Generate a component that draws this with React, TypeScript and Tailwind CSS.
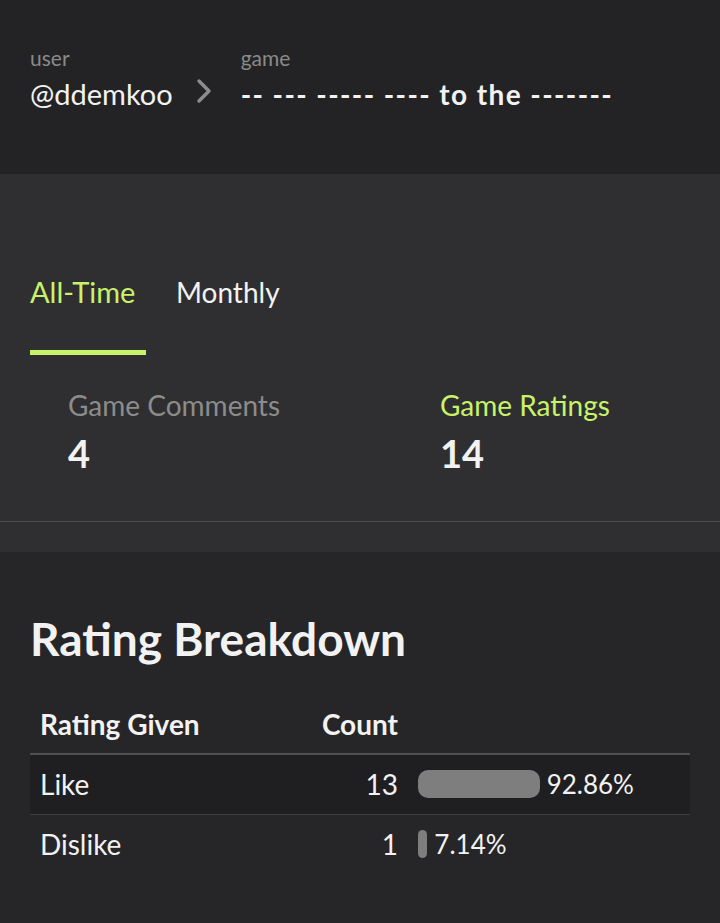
import { ChevronRight } from 'lucide-react'

const stats = [
  { label: 'Game Comments', value: 4, active: false },
  { label: 'Game Ratings', value: 14, active: true },
]

const ratings = [
  { label: 'Like', count: 13, pct: 92.86 },
  { label: 'Dislike', count: 1, pct: 7.14 },
]

export default function App() {
  return (
    <div className="min-h-[923px] overflow-hidden bg-[#262629] font-['Lato',sans-serif] text-[#f2f2f2]">
      {/* breadcrumb header */}
      <header className="h-[174px] bg-[#232325] px-[30px] pt-[44px]">
        <div className="flex items-start">
          <div className="flex flex-col">
            <span className="text-[21px] leading-[28px] text-[#8a8a8a]">user</span>
            <span className="mt-[4px] text-[29px] leading-[36px]">@ddemkoo</span>
          </div>
          <ChevronRight className="ml-[11px] mt-[27px] h-[40px] w-[40px] shrink-0 text-[#8c8c8c]" strokeWidth={2.1} />
          <div className="ml-[17px] flex flex-col">
            <span className="text-[21px] leading-[28px] text-[#8a8a8a]">game</span>
            <span className="mt-[4px] text-[28px] font-bold leading-[36px] tracking-[1.4px]">
              -- --- ----- ---- to the -------
            </span>
          </div>
        </div>
      </header>

      {/* stats */}
      <section className="bg-[#2f2f31] pt-[96px]">
        <nav className="flex gap-[30px] px-[30px]">
          <button className="w-[116px] border-b-[5px] border-[#c9f26b] pb-[36px] text-left text-[29px] leading-[44px] text-[#c9f26b]">
            All-Time
          </button>
          <button className="border-b-[5px] border-transparent pb-[36px] text-left text-[28px] leading-[44px] text-[#f2f2f2]">
            Monthly
          </button>
        </nav>
        <div className="mt-[32px] flex pb-[44px] pl-[68px]">
          {stats.map((s, i) => (
            <div key={s.label} className={i === 0 ? 'w-[372px] shrink-0' : 'flex-1'}>
              <div className={s.active ? 'text-[28px] leading-[36px] text-[#c9f26b]' : 'text-[28px] leading-[36px] text-[#8c8c8c]'}>
                {s.label}
              </div>
              <div className="mt-[6px] text-[38px] font-bold leading-[48px]">{s.value}</div>
            </div>
          ))}
        </div>
        <div className="h-[1px] bg-[#4b4b4d]" />
        <div className="h-[30px]" />
      </section>

      {/* breakdown */}
      <section className="px-[30px] pt-[59px]">
        <h2 className="text-[46px] font-bold leading-[56px]">Rating Breakdown</h2>
        <table className="mt-[27px] w-full border-collapse text-[28px]">
          <thead>
            <tr className="h-[60px] border-b-[2px] border-[#515153]">
              <th className="w-[280px] px-[10px] text-left font-bold">Rating Given</th>
              <th className="w-[98px] px-[10px] text-right font-bold">Count</th>
              <th />
            </tr>
          </thead>
          <tbody>
            {ratings.map((r, i) => (
              <tr
                key={r.label}
                className={i === 0 ? 'h-[60px] border-b border-[#3e3e41] bg-[#1f1f22]' : 'h-[60px]'}
              >
                <td className="px-[10px]">{r.label}</td>
                <td className="px-[10px] text-right">{r.count}</td>
                <td className="px-[10px]">
                  <div className="flex items-center gap-[7px]">
                    <div className="h-[28px] rounded-[10px] bg-[#7e7e7e]" style={{ width: `${Math.max(r.pct * 1.31, 9)}px` }} />
                    <span className="text-[26px]">{r.pct.toFixed(2)}%</span>
                  </div>
                </td>
              </tr>
            ))}
          </tbody>
        </table>
      </section>
    </div>
  )
}
